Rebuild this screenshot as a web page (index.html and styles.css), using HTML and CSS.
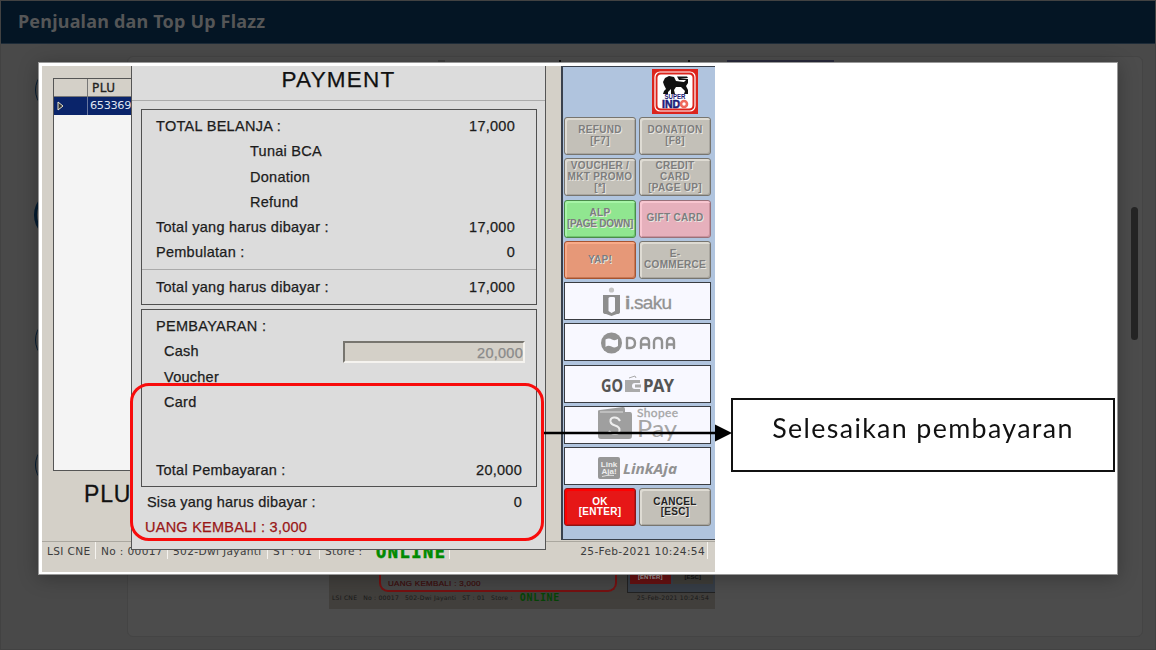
FILE: index.html
```
<!DOCTYPE html>
<html lang="id">
<head>
<meta charset="utf-8">
<title>Penjualan dan Top Up Flazz</title>
<link rel="stylesheet" href="styles.css">
</head>
<body>
<div class="page">
  <header class="topbar"><h1>Penjualan dan Top Up Flazz</h1></header>
  <main class="content">
    <nav class="steps">
      <i class="step"></i><i class="step step-active"></i><i class="step"></i><i class="step"></i>
    </nav>
    <section class="card">
      <div class="thumb-top"><i></i><i></i><i></i><b></b></div>
      <div class="thumb">
        <div class="thumb-body">
          <div class="thumb-outline">UANG KEMBALI : 3,000</div>
          <div class="thumb-panel"><span class="thumb-ok">[ENTER]</span><span class="thumb-cancel">[ESC]</span></div>
        </div>
        <div class="thumb-status">
          <span>LSI CNE</span><span>No : 00017</span><span>502-Dwi Jayanti</span><span>ST : 01</span><span>Store :</span><b>ONLINE</b><time>25-Feb-2021 10:24:54</time>
        </div>
      </div>
    </section>
    <i class="scroll-thumb"></i>
  </main>
</div>

<div class="lightbox">
  <figure class="slide">
    <div class="pos">
      <div class="workspace">
        <div class="grid">
          <div class="grid-head"><span></span><span>PLU</span></div>
          <div class="grid-row"><span><svg width="8" height="10" viewBox="0 0 8 10"><path d="M1 1 L6 5 L1 9 Z" fill="#333" stroke="#e8e4d0"/></svg></span><span>653369</span></div>
        </div>
        <div class="plu">PLU</div>
      </div>
      <aside class="panel">
        <svg class="brand" width="46" height="45" viewBox="0 0 46 45">
          <rect width="46" height="45" fill="#dc241c"/>
          <rect x="3" y="3" width="40" height="39" rx="5" fill="none" stroke="#fff" stroke-width="1.2"/>
          <rect x="5.500" y="5.500" width="35" height="34" rx="3.500" fill="#fff"/>
          <path d="M11 25 L12 22 L14 20 L12 16 L11 13 L13 9 L17 7 L22 8 L24 12 L32 13 L34 11 L27 11 L25 7.500 L35 7.500 L36 9 L28 9 L36 10 L36 14 L34 17 L36 21 L36 25 L32 25 L33 22 L29 18 L24 18 L22 21 L23 25 L19 25 L19 20 L16 23 L16 25 Z" fill="#111"/>
          <text x="23" y="30" text-anchor="middle" textLength="21" lengthAdjust="spacingAndGlyphs" class="brand-super">SUPER</text>
          <text x="10" y="38.500" textLength="18" lengthAdjust="spacingAndGlyphs" class="brand-indo">IND</text>
          <circle cx="32" cy="35" r="3" fill="#fff" stroke="#ef6a5c" stroke-width="2.600"/>
        </svg>
        <div class="keys">
          <button class="key">REFUND<br>[F7]</button>
          <button class="key">DONATION<br>[F8]</button>
          <button class="key">VOUCHER /<br>MKT PROMO<br>[*]</button>
          <button class="key">CREDIT<br>CARD<br>[PAGE UP]</button>
          <button class="key key-green">ALP<br><span class="tight">[PAGE DOWN]</span></button>
          <button class="key key-pink">GIFT CARD</button>
          <button class="key key-orange">YAP!</button>
          <button class="key">E-<br>COMMERCE</button>
          <div class="wallet"><svg width="144" height="36" viewBox="0 0 144 36">
            <circle cx="46.500" cy="7" r="2.600" fill="#c4c4c4"/>
            <path d="M38 12 H55 V29 Q55 31 52 31 L46.500 33 L41 31 Q38 31 38 29 Z" fill="#8d8d8d"/>
            <path d="M43.500 15 Q44 13.500 47 14 Q50 13.500 50 15 V28 L46.500 30 L43.500 28 Z" fill="#f8f8ff"/>
            <text x="60" y="26" textLength="47" class="w-isaku"><tspan class="strong">i</tspan>.saku</text>
          </svg></div>
          <div class="wallet"><svg width="144" height="36" viewBox="0 0 144 36">
            <circle cx="46.500" cy="19" r="10.500" fill="#929292"/>
            <path d="M40.500 15.500 Q44 13.500 47 15.500 Q50 17 53 15 V22 Q50 24.500 46.500 22.500 Q43 21 40.500 23 Z" fill="#f8f8ff"/>
            <g fill="none" stroke="#929292" stroke-width="2.400" stroke-linecap="round" stroke-linejoin="round">
              <path d="M62 14 V24 H65 Q70 24 70 19 Q70 14 65 14 Z"/>
              <path d="M76 24 V18 Q76 14 80 14 Q84 14 84 18 V24 M76 20.500 H84"/>
              <path d="M89 24 V18 Q89 14 93 14 Q97 14 97 18 V24"/>
              <path d="M102 24 V18 Q102 14 105.500 14 Q109 14 109 18 V24 M102 20.500 H109"/>
            </g>
          </svg></div>
          <div class="wallet"><svg width="144" height="36" viewBox="0 0 144 36">
            <text x="36" y="26" textLength="22" lengthAdjust="spacingAndGlyphs" class="w-gopay">GO</text>
            <path d="M60 14 H75 V17 H70 Q67 17 67 20 Q67 23 70 23 H75 V26 H60 Z M70 18.500 H76 V21.500 H70 Z" fill="#aaa"/>
            <path d="M64 12 L70 10 L71 12" fill="none" stroke="#aaa"/>
            <text x="78" y="26" textLength="31" lengthAdjust="spacingAndGlyphs" class="w-gopay">PAY</text>
          </svg></div>
          <div class="wallet"><svg width="144" height="36" viewBox="0 0 144 36">
            <path d="M33 4 Q33 3 35 3 L58 0 Q60 0 60 2 V5 H65 Q67 5 67 8 V29 Q67 32 64 32 H36 Q33 32 33 29 Z" fill="#9f9f9f"/>
            <path d="M35 5 H58" stroke="#ddd" fill="none"/>
            <path d="M55 14 Q53 10 49 10.500 Q45 11 45.500 14.500 Q46 17.500 50 18.500 Q55 20 54.500 23.500 Q54 27 50 27 Q46 27 44 24" fill="none" stroke="#eee" stroke-width="2"/>
            <text x="72" y="10" textLength="41" class="w-shopee">Shopee</text>
            <text x="72" y="30" textLength="40" lengthAdjust="spacingAndGlyphs" class="w-spay">Pay</text>
          </svg></div>
          <div class="wallet"><svg width="144" height="36" viewBox="0 0 144 36">
            <rect x="33" y="9" width="22" height="22" rx="2" fill="#979797"/>
            <text x="44" y="18.500" text-anchor="middle" class="w-mini">Link</text>
            <text x="44" y="25.500" text-anchor="middle" class="w-mini">Aja!</text>
            <path d="M37 28.500 Q43 26.500 49 27.500" stroke="#ddd" fill="none"/>
            <text x="58" y="25.500" textLength="54" lengthAdjust="spacingAndGlyphs" class="w-link">LinkAja</text>
          </svg></div>
          <button class="key key-ok">OK<br>[ENTER]</button>
          <button class="key key-cancel">CANCEL<br>[ESC]</button>
        </div>
      </aside>
      <footer class="status">
        <span class="s1">LSI CNE</span><span class="s2">No : 00017</span><span class="s3">502-Dwi Jayanti</span><span class="s4">ST : 01</span><span class="s5">Store :</span><b>ONLINE</b><time>25-Feb-2021 10:24:54</time>
      </footer>

      <div class="dialog">
        <h2>PAYMENT</h2>
        <section class="box box-total">
          <p><span class="caps">TOTAL BELANJA :</span><span>17,000</span></p>
          <p class="indent"><span>Tunai BCA</span></p>
          <p class="indent"><span>Donation</span></p>
          <p class="indent"><span>Refund</span></p>
          <p><span>Total yang harus dibayar :</span><span>17,000</span></p>
          <p><span>Pembulatan :</span><span>0</span></p>
          <p class="sum"><span>Total yang harus dibayar :</span><span>17,000</span></p>
        </section>
        <section class="box box-pay">
          <p><span class="caps">PEMBAYARAN :</span></p>
          <p class="item"><span>Cash</span><span class="field">20,000</span></p>
          <p class="item"><span>Voucher</span></p>
          <p class="item"><span>Card</span></p>
          <p class="paid"><span>Total Pembayaran :</span><span>20,000</span></p>
        </section>
        <p class="rest"><span>Sisa yang harus dibayar :</span><span>0</span></p>
        <p class="change"><span>UANG KEMBALI : 3,000</span></p>
      </div>
      <div class="highlight"></div>
    </div>
    <figcaption class="callout">Selesaikan pembayaran</figcaption>
    <svg class="arrow" width="190" height="20" viewBox="0 0 190 20"><path d="M0 10 H174" stroke="#000" stroke-width="2.600"/><path d="M171 1.500 L188 10 L171 18.500 Z"/></svg>
  </figure>
</div>
</body>
</html>
```
FILE: styles.css
```
* { box-sizing: border-box; }
body { margin: 0; width: 1156px; height: 650px; overflow: hidden; background: #494949; font-family: "Liberation Sans", Arial, sans-serif; }
h1, h2, p, figure { margin: 0; }

.page { height: 650px; border: 1px solid #424242; display: flex; flex-direction: column; }
.topbar { height: 43px; background: #041524; border-bottom: 1px solid #1d2b38; padding-left: 17px; display: flex; align-items: center; }
.topbar h1 { font: bold 18px/24px "Noto Sans", sans-serif; color: #555657; letter-spacing: .19px; padding-bottom: 2px; white-space: nowrap; }
.content { flex: 1; display: flex; position: relative; }
.steps { width: 126px; padding: 23px 0 0 34px; display: flex; flex-direction: column; gap: 79px; }
.step { flex: none; width: 46px; height: 46px; border: 1px solid #041b30; border-radius: 50%; }
.step-active { width: 50px; height: 50px; border-width: 3px; margin: -2px 0 -2px -1px; }
.card { width: 1016px; height: 581px; margin-top: 12px; background: #4c4c4c; border: 1px solid #444; border-radius: 6px; display: flex; flex-direction: column; justify-content: space-between; padding: 3px 0 27px 201px; }
.thumb-top { height: 2px; display: flex; align-items: stretch; }
.thumb-top i { width: 2px; background: #111; margin-left: 127px; }
.thumb-top i:first-child { width: 7px; background: #3d3d3d; margin-left: 109px; }
.thumb-top i:nth-child(2) { margin-left: 114px; }
.thumb-top b { width: 107px; margin-left: 37px; background: #292a3c; }
.thumb { width: 386px; background: #413f3c; }
.thumb-body { height: 18px; display: flex; justify-content: space-between; padding-left: 50px; }
.thumb-outline { width: 238px; height: 17px; border: 2px solid #751111; border-top: 0; border-radius: 0 0 9px 9px; background: #454545; color: #3b0c0c; font-size: 8px; letter-spacing: .3px; line-height: 18px; padding-left: 7px; -webkit-text-stroke: .2px #3b0c0c; }
.thumb-panel { width: 88px; background: #363d46; padding: 0 2px; display: flex; gap: 2px; border-left: 1px solid #222; border-bottom: 1px solid #222; }
.thumb-panel span { width: 41px; height: 9px; font: bold 6px/5px "Liberation Sans", sans-serif; text-align: center; }
.thumb-ok { background: #651111; color: #999; }
.thumb-cancel { background: #3d3c38; color: #111; }
.thumb-status { height: 16px; display: flex; gap: 6px; padding: 0 6px 0 3px; font: 6.1px/9px "DejaVu Sans", sans-serif; letter-spacing: .22px; color: #191919; white-space: nowrap; }
.thumb-status b { color: #064306; font: bold 10px/10px "DejaVu Sans Mono", monospace; letter-spacing: .7px; margin-left: 1px; }
.thumb-status time { margin-left: auto; }
.scroll-thumb { position: absolute; left: 1130px; top: 163px; width: 7px; height: 133px; border-radius: 4px; background: #252525; }

.lightbox { position: fixed; inset: 0; padding: 62px 38px 75px; display: flex; }
.slide { position: relative; width: 1080px; height: 513px; background: #fff; border: 1px solid #999; padding: 3px 2px 3px 3px; display: flex; justify-content: space-between; box-shadow: 0 3px 18px rgba(0,0,0,.28); }
.pos { position: relative; width: 673px; height: 506px; background: #d4d0c8; display: grid; grid-template: 475px 31px / 1fr 154px; }
.workspace { padding: 12px 0 0 11px; }
.grid { width: 79px; height: 393px; background: #f4f4f4; border: 1px solid #555; }
.grid-head, .grid-row { display: grid; grid-template-columns: 33px 1fr; height: 18px; }
.grid-head { background: #d4d0c8; border-bottom: 1px solid #777; color: #222; font: 12px/18px "DejaVu Sans", sans-serif; -webkit-text-stroke: .3px #222; letter-spacing: .5px; }
.grid-head span + span { border-left: 1px solid #777; padding-left: 4px; }
.grid-row { background: #0a246a; color: #dfe3f0; font: 11.3px/18px "DejaVu Sans", sans-serif; letter-spacing: -.35px; }
.grid-row span + span { border-left: 1px solid #68769f; padding-left: 2px; }
.grid-row svg { display: block; margin: 4px 0 0 3px; }
.plu { font-size: 23px; line-height: 26px; padding: 10px 0 0 31px; color: #111; letter-spacing: .8px; -webkit-text-stroke: .3px #111; }

.panel { background: #b0c4de; border: solid #39414d; border-width: 1px 0 1px 2px; height: 474px; padding: 2px 0 0 1px; }
.brand { display: block; margin: 0 0 3px 88px; }
.brand-super { font: bold 7px "Liberation Sans", sans-serif; fill: #1c1a78; }
.brand-indo { font: bold 10px "Liberation Sans", sans-serif; fill: #1c1a78; stroke: #1c1a78; stroke-width: .5px; }
.keys { width: 147px; display: grid; grid-template-columns: 72px 72px; grid-auto-rows: 38px; gap: 3.27px 3px; }
.key { display: block; margin: 0; padding: 0; border: 1px solid #77756f; border-radius: 3px; background: #c3c0b8; box-shadow: inset 2px 2px 0 #dedbd3, inset -1px -1px 0 #a9a69f; color: #7d7d7d; text-shadow: 1px 1px 0 #e9e7e2; font: bold 10px/10.6px "Liberation Sans", sans-serif; letter-spacing: .3px; white-space: nowrap; }
.tight { letter-spacing: -.25px; }
.key-green { background: #90e690; border-color: #4a8c4a; box-shadow: inset 2px 2px 0 #a7f5a7, inset -1px -1px 0 #6fc46f; }
.key-pink { background: #e6b0bc; border-color: #99717a; box-shadow: inset 2px 2px 0 #f8c6d0, inset -1px -1px 0 #c8929d; }
.key-orange { background: #e69878; border-color: #a55331; box-shadow: inset 2px 2px 0 #f9ab89, inset -1px -1px 0 #c87754; }
.key-ok { background: #e61717; border-color: #8d1515; color: #fff; text-shadow: none; box-shadow: inset 2px 2px 0 #f00, inset -1px -1px 0 #c31212; }
.key-cancel { color: #222; }
.wallet { grid-column: span 2; background: #f8f8ff; border: 1px solid #3a3d42; }
.wallet svg { display: block; }
.w-isaku { font: 19px "Liberation Sans", sans-serif; fill: #929292; stroke: #929292; stroke-width: .3px; }
.strong { font-weight: bold; }
.w-gopay { font: bold 17px "Noto Sans", sans-serif; fill: #555; }
.w-shopee { font: 12px Lato, sans-serif; fill: #a5a5a5; stroke: #a5a5a5; stroke-width: .3px; }
.w-spay { font: 23px Lato, sans-serif; fill: #a5a5a5; }
.w-mini { font: bold 8px "Liberation Sans", sans-serif; fill: #eee; }
.w-link { font: italic bold 15px "Noto Sans", sans-serif; fill: #929292; }

.status { grid-column: 1 / 3; border-top: 1px solid #aaa79f; display: flex; height: 31px; padding: 0 7px 0 0; font: 10.6px/18px "DejaVu Sans", sans-serif; letter-spacing: .35px; color: #3c3c3c; white-space: nowrap; }
.status span, .status b { height: 17px; border-right: 1px solid #f5f3ef; padding-left: 5px; }
.s1 { width: 54px; }
.s2 { width: 72px; }
.s3 { width: 100px; }
.s4 { width: 52px; }
.s5 { width: 47px; border-right: 0 !important; }
.status b { width: 83px; padding-left: 9px; color: #008a00; font: bold 17px/21px "DejaVu Sans Mono", monospace; letter-spacing: 1.5px; -webkit-text-stroke: .6px #008a00; }
.status time { margin-left: auto; padding-right: 2px; border-right: 1px solid #f5f3ef; height: 17px; }

.dialog { position: absolute; left: 89px; top: 0; width: 415px; height: 484px; background: #dcdcdc; border: solid #555; border-width: 0 1px 1px 1px; padding: 0 8px 0 9px; color: #1c1c1c; font-size: 14.5px; -webkit-text-stroke: .25px; }
.dialog h2 { height: 35px; margin: 0 -8px 8px -9px; border-bottom: 1px solid #aaa; text-align: center; font-weight: normal; font-size: 22.5px; line-height: 28px; letter-spacing: 1.2px; color: #111; }
.dialog p { height: 25.3px; line-height: 25.3px; display: flex; justify-content: space-between; letter-spacing: .26px; white-space: nowrap; }
.dialog .caps { letter-spacing: .3px; }
.box { border: 1px solid #505050; padding: 4px 21px 0 14px; }
.box-total { height: 196px; margin-bottom: 4px; }
.box-total .indent { padding-left: 94px; }
.dialog .sum { height: 36px; line-height: 35px; border-top: 1px solid #aaa; margin: 3px -21px 0 -14px; padding: 0 21px 0 14px; }
.box-pay { height: 178px; margin-bottom: 3px; padding-right: 11px; }
.dialog .item { padding-left: 8px; }
.field { width: 182px; height: 22px; line-height: 20px; margin-top: 2px; background: #d4d0c8; border: 2px solid #77756f; border-color: #77756f #f5f3ef #f5f3ef #77756f; color: #8a8a8a; text-align: right; }
.dialog .paid { margin-top: 43px; padding-right: 3px; }
.dialog .rest { padding: 0 15px 0 6px; letter-spacing: .2px; }
.dialog .change { padding-left: 4px; color: #991717; letter-spacing: .25px; }
.highlight { position: absolute; left: 88px; top: 317px; width: 414px; height: 158px; border: 3px solid #f80c0c; border-radius: 19px; }

.callout { width: 384px; height: 74px; margin-top: 332px; border: 2px solid #111; text-align: center; font: 26.8px/57px Lato, sans-serif; letter-spacing: 1.35px; color: #111; white-space: nowrap; }
.arrow { position: absolute; left: 505px; top: 360px; }
```
